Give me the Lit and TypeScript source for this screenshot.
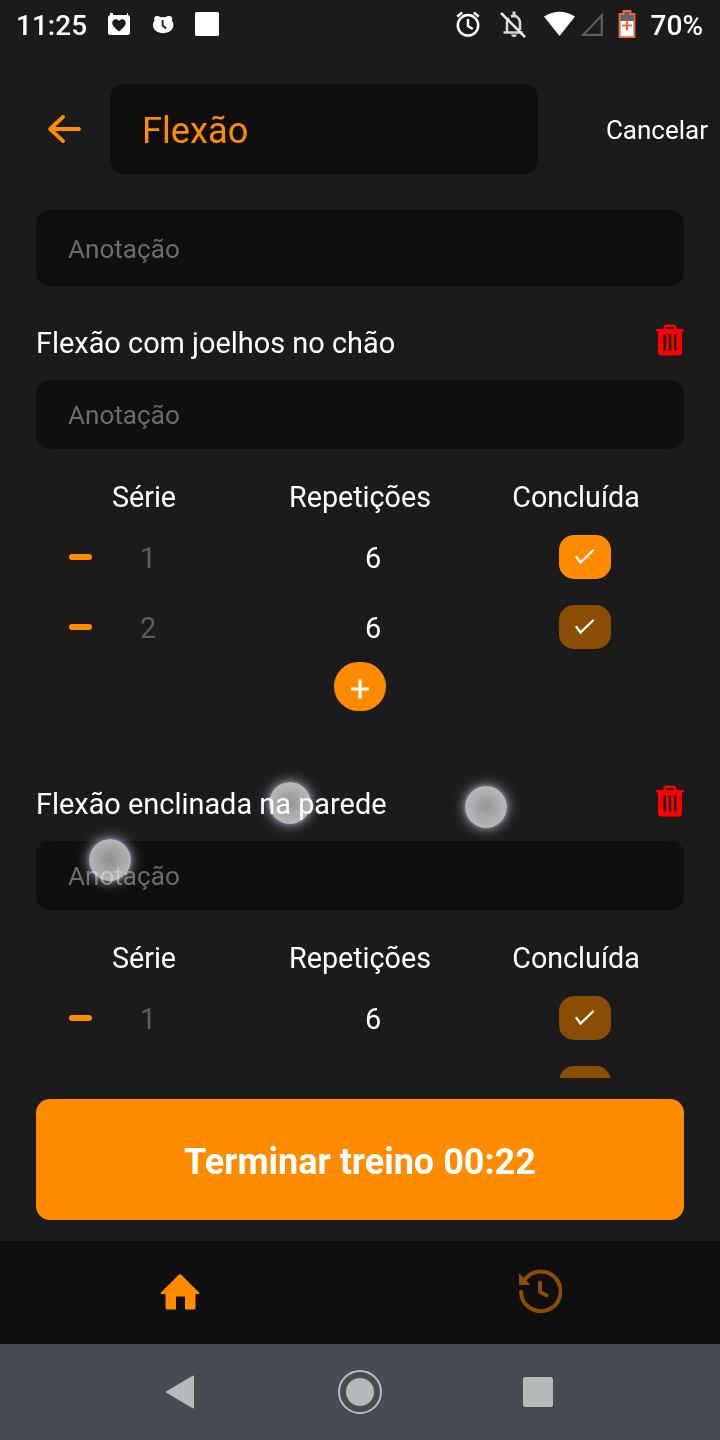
import { LitElement, html, css, svg } from "lit";
import { customElement, property } from "lit/decorators.js";
import { classMap } from "lit/directives/class-map.js";

interface Serie {
  reps: number;
  done: boolean;
}

interface Exercise {
  name: string;
  series: Serie[];
}

const ORANGE = "#ff8c00";

@customElement("status-bar")
class StatusBar extends LitElement {
  static styles = css`
    :host {
      display: flex;
      align-items: center;
      flex: none;
      height: 48px;
      padding: 0 17px 0 16px;
      font-size: 28px;
      font-weight: 500;
      color: #fff;
    }
    .time { width: 91px; padding-top: 3px; }
    .percent { padding-top: 3px; }
    .left { flex: 1; display: flex; }
    svg { display: block; flex: none; }
  `;

  render() {
    return html`
      <span class="time">11:25</span>
      <div class="left">
        <svg width="120" height="48" viewBox="107 0 120 48" fill="#fff">
          <path d="M112 13h1v2h14v-2h1v2q2 .5 2 2.500v15q0 2.500-2.500 2.500h-17q-2.500 0-2.500-2.500v-15q0-2 2-2.500v-2z" />
          <path d="M119 31.500c-4-3.500-6.700-5.800-6.700-8.600 0-3.700 4.600-4.800 6.700-1.800 2.100-3 6.700-1.900 6.700 1.800 0 2.800-2.700 5.100-6.700 8.600z" fill="#1b1b1b" />
          <path d="M157 16c2 0 3 .8 3.600 1.200q2.400-.6 5 0c.8-.6 2-1.200 3.600-1.200 2.500 0 3.800 2.200 2.600 4.400 1.200 1.800 1.800 3.200 1.600 5.200-.4 4.600-4.700 7.600-10.200 7.600s-9.800-3-10.200-7.600c-.2-2 .4-3.400 1.600-5.200-1.200-2.200-.1-4.400 2.400-4.400z" />
          <path d="M162.600 20v5.500l3.600 3" fill="none" stroke="#1b1b1b" stroke-width="1.800" />
          <rect x="195" y="12" width="24" height="24" rx="1.500" />
        </svg>
      </div>
      <svg width="199" height="48" viewBox="452 0 199 48">
        <g fill="none" stroke="#fff" stroke-width="2.500">
          <circle cx="468" cy="25.300" r="10.200" />
          <path d="M457.200 16.500l5-4M478.800 16.500l-5-4M468 19v7l4.800 3" />
        </g>
        <g fill="none" stroke="#d6d6d6" stroke-width="2.600">
          <path d="M503.500 32.500h19M507 32v-9q0-3 2-4.800M511 16.500q3.500-1.500 6 .5 3 2 3 6v7" />
        </g>
        <path d="M512.500 11.500h3v4h-3zM511 34.500h6q-.5 2.500-3 2.500t-3-2.500z" fill="#d6d6d6" />
        <path d="M501 13l24 24" stroke="#e8e8e8" stroke-width="2.600" />
        <path d="M544 16.500q15.500-9.500 31 0L560.300 35q-.8 1-1.600 0z" fill="#fff" />
        <path d="M601.800 15.500V34.800H583.300z" fill="none" stroke="#5c5c5c" stroke-width="2.200" />
        <path d="M619.500 14h4v-3h7v3h4v23h-15z" fill="#666" stroke="#f4673c" stroke-width="1.800" />
        <rect x="620.500" y="21" width="13" height="15.200" fill="#fff" />
        <path d="M622 25.500h10M627 20.500v10" stroke="#f4673c" stroke-width="2.200" />
      </svg>
      <span class="percent">70%</span>
    `;
  }
}

@customElement("exercise-block")
class ExerciseBlock extends LitElement {
  @property({ attribute: false }) exercise!: Exercise;

  static styles = css`
    :host { display: block; height: 461px; font-size: 28.900px; }
    .title { height: 74px; display: flex; align-items: center; justify-content: space-between; }
    .trash { display: block; margin-top: -6px; }
    .note {
      height: 69px;
      box-sizing: border-box;
      padding: 1px 32px 0;
      border-radius: 14px;
      background: #0f0f0f;
      color: #6b6b6b;
      font-size: 26.100px;
      display: flex;
      align-items: center;
    }
    .heads { height: 73px; display: grid; grid-template-columns: repeat(3, 1fr); padding-top: 31px; box-sizing: border-box; text-align: center; line-height: 34px; font-size: 28.700px; }
    .row { height: 70px; display: grid; grid-template-columns: 24px 110px 340px 68px; align-items: center; padding-left: 33px; }
    .minus { width: 23px; height: 6px; border-radius: 3px; background: #ff8c00; }
    .index { color: #5c5c5c; text-align: center; padding-top: 2px; }
    .reps { text-align: center; padding-top: 2px; }
    .check { justify-self: end; width: 52px; height: 44px; border-radius: 15px; background: #8a4d05; display: flex; align-items: center; justify-content: center; }
    .done { background: #ff8c00; }
    .add { width: 52px; height: 49px; margin: 0 auto; border-radius: 26px; background: #ff8c00; display: flex; align-items: center; justify-content: center; }
    .add svg { margin-top: 4px; }
  `;

  render() {
    return html`
      <div class="title">
        <span>${this.exercise.name}</span>
        <svg class="trash" width="28" height="32" viewBox="0 0 28 32">
          <path d="M8.500 6V4.500Q8.500 1.700 11.300 1.700h5.400q2.800 0 2.800 2.800V6" fill="none" stroke="#f00" stroke-width="2.400" />
          <path fill-rule="evenodd" fill="#f00" d="M1 5h26q1 0 1 1.200T27 7.500h-1V28q0 3.500-3.500 3.500h-17Q2 31.500 2 28V7.500H1Q0 7.500 0 6.200T1 5zM7.500 10.500v16h2.400v-16zM12.800 10.500v16h2.400v-16zM18.100 10.500v16h2.400v-16z" />
        </svg>
      </div>
      <div class="note">Anotação</div>
      <div class="heads"><span>Série</span><span>Repetições</span><span>Concluída</span></div>
      ${this.exercise.series.map(
        (s, i) => html`
          <div class="row">
            <span class="minus"></span>
            <span class="index">${i + 1}</span>
            <span class="reps">${s.reps}</span>
            <span class=${classMap({ check: true, done: s.done })}>
              <svg width="20" height="16" viewBox="0 0 20 16"><path d="M1.500 8l4 5.500L18 1.500" fill="none" stroke="#fff" stroke-width="2.200" stroke-linecap="round" /></svg>
            </span>
          </div>
        `
      )}
      <div class="add">
        <svg width="18" height="20" viewBox="0 0 18 20"><path d="M0 10h18M9 .500v19" stroke="#fff" stroke-width="3.200" /></svg>
      </div>
    `;
  }
}

@customElement("app-root")
class AppRoot extends LitElement {
  exercises: Exercise[] = [
    { name: "Flexão com joelhos no chão", series: [{ reps: 6, done: true }, { reps: 6, done: false }] },
    { name: "Flexão enclinada na parede", series: [{ reps: 6, done: false }, { reps: 6, done: false }] },
  ];

  static styles = css`
    :host {
      display: flex;
      flex-direction: column;
      position: relative;
      width: 720px;
      height: 1440px;
      overflow: hidden;
      background: #1b1b1b;
      color: #fff;
      font-family: Roboto, sans-serif;
    }
    svg { display: block; }
    .header { flex: none; display: flex; align-items: center; padding: 36px 12px 0 48px; height: 90px; }
    .workout { width: 396px; height: 90px; margin-left: 29px; padding-left: 32px; border-radius: 14px; background: #0f0f0f; color: #ff8c00; font-size: 36.200px; display: flex; align-items: center; }
    .workout span { padding-top: 3px; }
    .cancel { margin-left: auto; font-size: 26px; padding-top: 2px; }
    .scroll { flex: none; height: 868px; margin-top: 36px; padding: 0 36px; overflow: hidden; }
    .note { height: 76px; margin-bottom: 20px; padding-left: 32px; border-radius: 14px; background: #0f0f0f; color: #6b6b6b; font-size: 26.100px; display: flex; align-items: center; }
    .note span { padding-top: 2px; }
    .finish { flex: none; height: 121px; margin: 21px 36px; border-radius: 14px; background: #ff8c00; font-size: 36px; font-weight: 700; display: flex; align-items: center; justify-content: center; }
    .finish span { padding-top: 4px; }
    .tabs { flex: none; height: 103px; background: #0f0f0f; display: grid; grid-template-columns: 1fr 1fr; place-items: center; }
    .home { margin-bottom: 2px; }
    .history { margin-bottom: 3px; }
    .system { flex: none; height: 96px; background: #454d52; }
    .touch {
      position: absolute;
      width: 42px;
      height: 42px;
      border-radius: 50%;
      background: radial-gradient(circle, #888 0%, #b4b4b4 75%);
      box-shadow: 0 0 3px 1px #5c5c8c, 0 0 12px 2px #777;
      mix-blend-mode: screen;
    }
    .touch-a { left: 269px; top: 782px; }
    .touch-b { left: 465px; top: 786px; }
    .touch-c { left: 89px; top: 839px; }
  `;

  render() {
    return html`
      <status-bar></status-bar>
      <div class="header">
        <svg width="33" height="28" viewBox="0 0 33 28">
          <path d="M15 1.800L2.200 14 15 26.200M2.500 14H31" fill="none" stroke=${ORANGE} stroke-width="3.800" stroke-linecap="round" stroke-linejoin="round" />
        </svg>
        <div class="workout"><span>Flexão</span></div>
        <span class="cancel">Cancelar</span>
      </div>
      <div class="scroll">
        <div class="note"><span>Anotação</span></div>
        ${this.exercises.map((e) => html`<exercise-block .exercise=${e}></exercise-block>`)}
      </div>
      <div class="finish"><span>Terminar treino 00:22</span></div>
      <div class="tabs">
        <svg class="home" width="40" height="36" viewBox="0 0 40 36">
          <path fill=${ORANGE} d="M19 .6q1-.9 2 0L39.300 18.700q.5 1.300-.8 1.300H35.500V34q0 1.500-1.500 1.500H25V22.500H16V35.500H7q-1.500 0-1.500-1.500V20H1.500Q.2 20 .7 18.700z" />
        </svg>
        <svg class="history" width="44" height="46" viewBox="518 1269 44 46">
          <path d="M521 1293A19.800 19.800 0 1 0 525 1280.400" fill="none" stroke="#8a4d05" stroke-width="4" stroke-linecap="round" />
          <path d="M519 1274l11 12h-11zM525 1279l5 7h-8z" fill="#8a4d05" />
          <path d="M540 1283.500v9.500l6.500 3.200" fill="none" stroke="#8a4d05" stroke-width="4" stroke-linecap="round" stroke-linejoin="round" />
        </svg>
      </div>
      <div class="system">
        <svg width="720" height="96" viewBox="0 1344 720 96">
          ${svg`
            <path d="M167 1392l26-15.500v31z" fill="#b4b9ba" stroke="#b4b9ba" stroke-width="2" stroke-linejoin="round" />
            <circle cx="360" cy="1392" r="21" fill="none" stroke="#b7bfc5" stroke-width="2" />
            <circle cx="360" cy="1392" r="14" fill="#b4b9ba" />
            <rect x="523" y="1377" width="30" height="30" rx="2.500" fill="#b4b9ba" />
          `}
        </svg>
      </div>
      <i class="touch touch-a"></i>
      <i class="touch touch-b"></i>
      <i class="touch touch-c"></i>
    `;
  }
}
